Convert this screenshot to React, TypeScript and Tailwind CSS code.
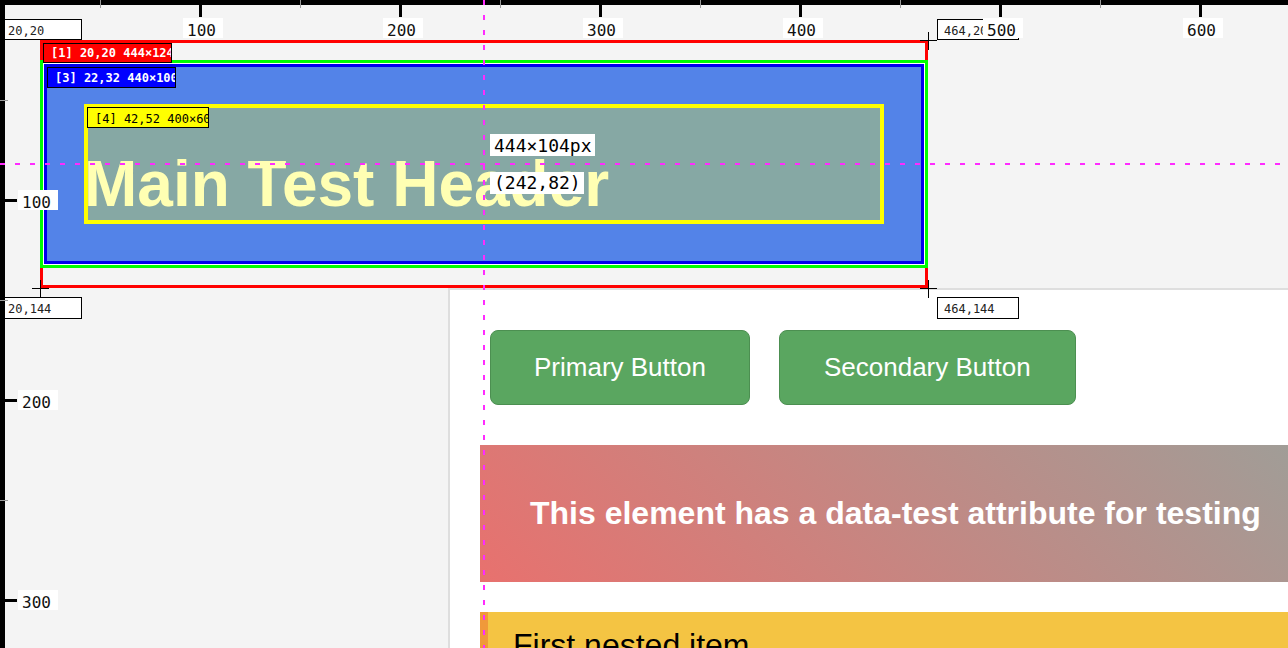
import React from "react";

const topMajor = [
  { x: 200, t: "100" },
  { x: 400, t: "200" },
  { x: 600, t: "300" },
  { x: 800, t: "400" },
  { x: 1000, t: "500" },
  { x: 1200, t: "600" },
];
const topMinor = [100, 300, 500, 700, 900, 1100];
const leftMajor = [
  { y: 200, t: "100" },
  { y: 400, t: "200" },
  { y: 600, t: "300" },
];
const leftMinor = [100, 300, 500];

function Cross({ x, y }: { x: number; y: number }) {
  return (
    <>
      <div className="absolute h-px w-[17px] bg-black" style={{ left: x - 8, top: y }} />
      <div className="absolute h-[18px] w-px bg-black" style={{ left: x, top: y - 8 }} />
    </>
  );
}

export default function App() {
  return (
    <div className="relative h-[648px] w-[1288px] overflow-hidden bg-[#f4f4f4] font-['Liberation_Sans',Arial,sans-serif]">
      {/* page content */}
      <div className="pl-[40px] pt-[40px]">
        <div className="h-[248px] w-[888px] pt-[20px] shadow-[inset_0_0_0_3px_#ff0000]">
          <div className="h-[208px] bg-white p-[4px] shadow-[inset_0_0_0_3px_#00ff00]">
            <div className="h-[200px] bg-[#5383e8] pl-[40px] pt-[40px] shadow-[inset_0_0_0_3px_#0000ee]">
              <div className="h-[120px] w-[800px] bg-[#86a8a4] pt-[43px] shadow-[inset_0_0_0_4px_#ffff00]">
                <h1 className="whitespace-nowrap text-[64px] font-bold leading-[74px] text-[#ffffb3]">
                  Main Test Header
                </h1>
              </div>
            </div>
          </div>
        </div>
      </div>
      <div className="flex h-[360px]">
        <div className="w-[448px] shrink-0" />
        <div className="flex-1 border-l-2 border-t-2 border-[#dedede] bg-white pl-[30px] pt-[40px]">
          <div className="ml-[10px] flex gap-[29px]">
            <button className="flex h-[75px] items-center rounded-[8px] border border-[#4c8f51] bg-[#5aa660] px-[43px] text-[26px] text-white">
              Primary Button
            </button>
            <button className="flex h-[75px] items-center rounded-[8px] border border-[#4c8f51] bg-[#5aa660] px-[44px] text-[26px] text-white">
              Secondary Button
            </button>
          </div>
          <div className="mt-[40px] whitespace-nowrap bg-[linear-gradient(45deg,#e8716e,#9f9e98)] p-[50px] text-[32px] font-bold leading-[37px] text-white">
            This element has a data-test attribute for testing
          </div>
          <div className="mt-[30px] whitespace-nowrap border-l-[8px] border-[#f0993a] bg-[#f4c443] pl-[25px] pt-[15px] text-[32px] leading-[37px] text-black">
            First nested item
          </div>
        </div>
      </div>

      {/* element labels */}
      <div className="absolute left-[43px] top-[43px] h-[20px] w-[129px] overflow-hidden whitespace-nowrap border border-black bg-[#ff0000] pl-[7px] pt-[3px] font-['DejaVu_Sans_Mono',monospace] text-[12px] font-bold leading-[12px] text-white">
        [1] 20,20 444×124
      </div>
      <div className="absolute left-[47px] top-[67px] h-[21px] w-[129px] overflow-hidden whitespace-nowrap border border-black bg-[#0000ff] pl-[7px] pt-[4px] font-['DejaVu_Sans_Mono',monospace] text-[12px] font-bold leading-[12px] text-white">
        [3] 22,32 440×100
      </div>
      <div className="absolute left-[87px] top-[107px] h-[21px] w-[122px] overflow-hidden whitespace-nowrap border border-black bg-[#ffff00] pl-[7px] pt-[5px] font-['DejaVu_Sans_Mono',monospace] text-[12px] leading-[12px] text-black">
        [4] 42,52 400×60
      </div>

      {/* corner markers */}
      <Cross x={928} y={40} />
      <Cross x={40} y={288} />
      <Cross x={928} y={288} />
      <div className="absolute left-[4px] top-[19px] h-[21px] w-[78px] whitespace-nowrap border border-black bg-white pl-[3px] pt-[5px] font-['DejaVu_Sans_Mono',monospace] text-[12px] leading-[12px] text-[#222]">
        20,20
      </div>
      <div className="absolute left-[937px] top-[19px] h-[21px] w-[82px] whitespace-nowrap border border-black bg-white pl-[6px] pt-[5px] font-['DejaVu_Sans_Mono',monospace] text-[12px] leading-[12px] text-[#222]">
        464,20
      </div>
      <div className="absolute left-[4px] top-[297px] h-[22px] w-[78px] whitespace-nowrap border border-black bg-white pl-[3px] pt-[5px] font-['DejaVu_Sans_Mono',monospace] text-[12px] leading-[12px] text-[#222]">
        20,144
      </div>
      <div className="absolute left-[937px] top-[297px] h-[22px] w-[82px] whitespace-nowrap border border-black bg-white pl-[6px] pt-[5px] font-['DejaVu_Sans_Mono',monospace] text-[12px] leading-[12px] text-[#222]">
        464,144
      </div>

      {/* dimension labels */}
      <div className="absolute left-[490px] top-[134px] h-[22px] whitespace-nowrap bg-white pl-[4px] pr-[3px] pt-[1px] font-['DejaVu_Sans_Mono',monospace] text-[18px] leading-[22px] text-black">
        444×104px
      </div>
      <div className="absolute left-[490px] top-[172px] h-[22px] whitespace-nowrap bg-white pl-[4px] pr-[3px] font-['DejaVu_Sans_Mono',monospace] text-[18px] leading-[22px] text-black">
        (242,82)
      </div>

      {/* rulers */}
      <div className="absolute left-0 top-0 h-[5px] w-[1288px] bg-black" />
      <div className="absolute left-0 top-0 h-[648px] w-[5px] bg-black" />
      {topMinor.map((x) => (
        <div key={"tm" + x} className="absolute top-0 h-[8px] w-px bg-[#9a9a9a]" style={{ left: x }} />
      ))}
      {leftMinor.map((y) => (
        <div key={"lm" + y} className="absolute left-0 h-px w-[8px] bg-[#9a9a9a]" style={{ top: y }} />
      ))}
      {topMajor.map((m) => (
        <React.Fragment key={"t" + m.x}>
          <div className="absolute top-0 h-[17px] w-[3px] bg-black" style={{ left: m.x - 1 }} />
          <div
            className="absolute top-[18px] h-[20px] w-[40px] bg-white pl-[4px] pt-[5px] font-['DejaVu_Sans_Mono',monospace] text-[16px] leading-[16px] text-[#111]"
            style={{ left: m.x - 17 }}
          >
            {m.t}
          </div>
        </React.Fragment>
      ))}
      {leftMajor.map((m) => (
        <React.Fragment key={"l" + m.y}>
          <div className="absolute left-0 h-[3px] w-[17px] bg-black" style={{ top: m.y - 1 }} />
          <div
            className="absolute left-[18px] h-[20px] w-[40px] bg-white pl-[4px] pt-[5px] font-['DejaVu_Sans_Mono',monospace] text-[16px] leading-[16px] text-[#111]"
            style={{ top: m.y - 10 }}
          >
            {m.t}
          </div>
        </React.Fragment>
      ))}

      {/* crosshair */}
      <svg className="pointer-events-none absolute left-0 top-0" width="1288" height="648">
        <line x1="484" y1="0" x2="484" y2="648" stroke="#ff2bff" strokeWidth="2" strokeDasharray="5 10" />
        <line x1="0" y1="164" x2="1288" y2="164" stroke="#ff2bff" strokeWidth="2" strokeDasharray="5 10" />
      </svg>
    </div>
  );
}
